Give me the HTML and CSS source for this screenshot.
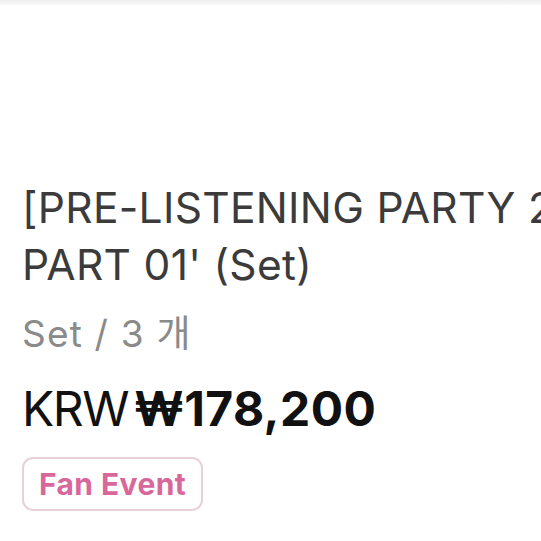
FILE: index.html
```html
<!DOCTYPE html>
<html lang="ko">
<head>
<meta charset="utf-8">
<link rel="stylesheet" href="styles.css">
</head>
<body>
<div class="topbar"></div>
<main class="product">
  <h1 class="title"><span class="line">[PRE-LISTENING PARTY 2025 'THE FIRST'</span><span class="line">PART 01' (Set)</span></h1>
  <p class="option">Set / 3 개</p>
  <p class="price"><span class="cur">KRW</span><span class="amount">₩178,200</span></p>
  <div class="tags"><span class="badge">Fan Event</span></div>
</main>
</body>
</html>
```
FILE: styles.css
```css
html, body {
  margin: 0;
  padding: 0;
  background: #fff;
  overflow: hidden;
  width: 541px;
  height: 541px;
}
body {
  font-family: Inter, "Noto Sans CJK KR", sans-serif;
}
.topbar {
  height: 5px;
  background: linear-gradient(#eeeeee, #fafafa);
}
.product {
  display: flex;
  flex-direction: column;
  align-items: flex-start;
  padding: 174px 0 0 22px;
}
.title {
  margin: 0;
  font-size: 42.5px;
  font-weight: 400;
  line-height: 57px;
  letter-spacing: 0.3px;
  color: #3b3b3b;
  white-space: nowrap;
}
.line {
  display: block;
}
.option {
  margin: 17px 0 0;
  font-size: 37px;
  line-height: 48px;
  letter-spacing: 1.2px;
  color: #8a8a8a;
}
.price {
  margin: 22px 0 0;
  display: flex;
  gap: 6px;
  font-size: 48px;
  line-height: 58px;
  color: #111;
  white-space: nowrap;
}
.cur {
  font-weight: 400;
  letter-spacing: -1.5px;
}
.amount {
  font-weight: 700;
  letter-spacing: 0.4px;
}
.tags {
  margin-top: 19px;
  display: flex;
}
.badge {
  display: inline-flex;
  align-items: center;
  height: 50px;
  padding: 0 15px;
  border: 2px solid #e8d0da;
  border-radius: 11px;
  font-size: 30px;
  font-weight: 700;
  letter-spacing: 0.4px;
  color: #d8679c;
}
```
